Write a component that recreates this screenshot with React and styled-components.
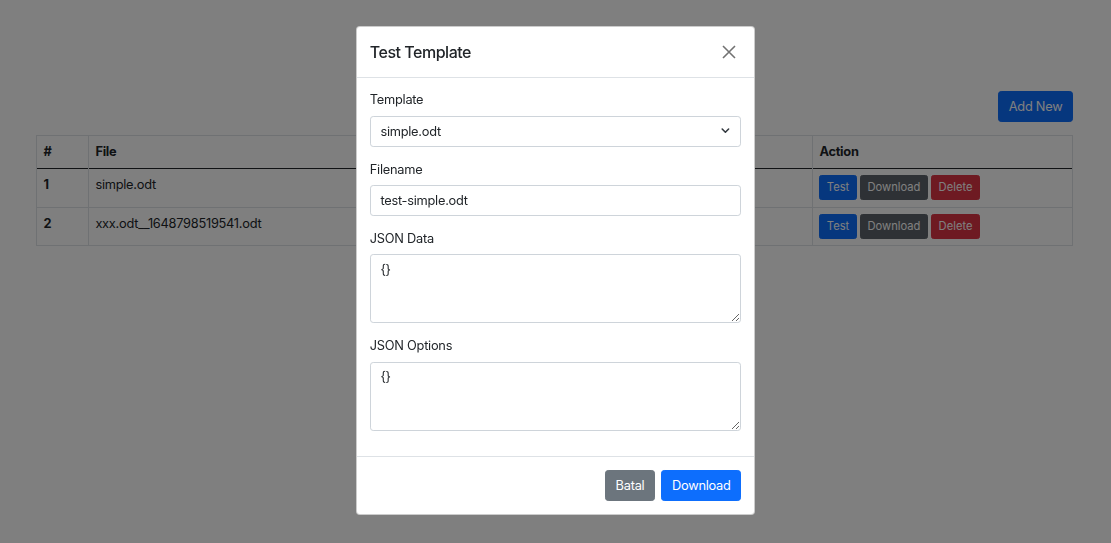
import React from "react";
import styled, { createGlobalStyle } from "styled-components";

const GlobalStyle = createGlobalStyle`
  * { box-sizing: border-box; }
  html, body { margin: 0; padding: 0; }
  body {
    font-family: Inter, "Noto Sans", "Liberation Sans", sans-serif;
    font-size: 12.8px;
    line-height: 1.5;
    letter-spacing: -0.02em;
    color: #212529;
    background: #fff;
    overflow: hidden;
  }
`;

const Page = styled.div`
  padding: 91px 38px 0 36px;
  min-height: 543px;
`;

const Toolbar = styled.div`
  display: flex;
  justify-content: flex-end;
  margin-bottom: 12.8px;
`;

const Button = styled.button`
  font-family: inherit;
  letter-spacing: ${(p) => (p.$sm ? "0" : "inherit")};
  font-size: ${(p) => (p.$sm ? "11.2px" : "12.8px")};
  line-height: 1.5;
  font-weight: 400;
  color: #fff;
  border: 1px solid transparent;
  border-radius: ${(p) => (p.$sm ? "2.56px" : "3.2px")};
  padding: ${(p) => (p.$sm ? "3.2px 6.4px" : "4.8px 9.6px")};
  background: ${(p) =>
    p.$variant === "secondary"
      ? "#6c757d"
      : p.$variant === "dark"
      ? "#5c636a"
      : p.$variant === "danger"
      ? "#dc3545"
      : "#0d6efd"};
  border-color: ${(p) =>
    p.$variant === "secondary"
      ? "#6c757d"
      : p.$variant === "dark"
      ? "#5c636a"
      : p.$variant === "danger"
      ? "#dc3545"
      : "#0d6efd"};
  cursor: pointer;
`;

const Table = styled.table`
  width: 100%;
  border-collapse: collapse;
  border: 1px solid #dee2e6;
  vertical-align: top;
  table-layout: fixed;
`;

const Th = styled.th`
  text-align: left;
  font-weight: 700;
  padding: 6.4px;
  border: 1px solid #dee2e6;
  border-bottom: none;
  width: ${(p) => p.$w || "auto"};
`;

const Td = styled.td`
  padding: 6.4px;
  border: 1px solid #dee2e6;
  border-top: ${(p) => (p.$first ? "1.6px solid #212529" : "1px solid #dee2e6")};
  font-weight: ${(p) => (p.$bold ? 700 : 400)};
  vertical-align: top;
`;

const Actions = styled.div`
  display: flex;
  gap: 3.4px;
`;

const Backdrop = styled.div`
  position: fixed;
  inset: 0;
  background: rgba(0, 0, 0, 0.5);
`;

const ModalLayer = styled.div`
  position: fixed;
  inset: 0;
  display: flex;
  justify-content: center;
  align-items: flex-start;
  padding-top: 26px;
`;

const Dialog = styled.div`
  width: 399px;
  background: #fff;
  border: 1px solid rgba(0, 0, 0, 0.2);
  border-radius: 4px;
  display: flex;
  flex-direction: column;
`;

const Header = styled.div`
  display: flex;
  align-items: center;
  justify-content: space-between;
  padding: 12.8px;
  border-bottom: 1px solid #dee2e6;
`;

const Title = styled.h5`
  margin: 0;
  font-size: 16px;
  font-weight: 500;
  line-height: 1.5;
  letter-spacing: -0.03em;
`;

const Close = styled.button`
  width: 16px;
  height: 16px;
  padding: 0;
  margin-right: 4px;
  border: 0;
  background: transparent;
  display: flex;
  align-items: center;
  justify-content: center;
  opacity: 0.55;
`;

const Body = styled.div`
  padding: 12.8px;
`;

const Group = styled.div`
  margin-bottom: 12.8px;
`;

const Label = styled.label`
  display: block;
  margin-bottom: 6.4px;
`;

const fieldCss = `
  display: block;
  width: 100%;
  font-family: inherit;
  letter-spacing: inherit;
  font-size: 12.8px;
  line-height: 1.5;
  color: #212529;
  background: #fff;
  border: 1px solid #ced4da;
  border-radius: 3.2px;
  padding: 4.8px 9.6px;
  outline: none;
  margin: 0;
`;

const Input = styled.input`
  ${fieldCss}
`;

const SelectWrap = styled.div`
  position: relative;
`;

const Select = styled.select`
  ${fieldCss}
  appearance: none;
  -webkit-appearance: none;
  padding-right: 30px;
`;

const Chevron = styled.svg`
  position: absolute;
  right: 9.6px;
  top: 50%;
  transform: translateY(-50%);
  pointer-events: none;
`;

const TextArea = styled.textarea`
  ${fieldCss}
  height: 69px;
  resize: vertical;
`;

const Footer = styled.div`
  display: flex;
  justify-content: flex-end;
  align-items: center;
  gap: 6.4px;
  padding: 12.8px 12.8px;
  border-top: 1px solid #dee2e6;
`;

const rows = [
  { id: 1, file: "simple.odt" },
  { id: 2, file: "xxx.odt__1648798519541.odt" },
];

export default function App() {
  return (
    <>
      <GlobalStyle />
      <Page>
        <Toolbar>
          <Button>Add New</Button>
        </Toolbar>
        <Table>
          <thead>
            <tr>
              <Th $w="52px">#</Th>
              <Th>File</Th>
              <Th $w="260px">Action</Th>
            </tr>
          </thead>
          <tbody>
            {rows.map((r, i) => (
              <tr key={r.id}>
                <Td $bold $first={i === 0}>{r.id}</Td>
                <Td $first={i === 0}>{r.file}</Td>
                <Td $first={i === 0}>
                  <Actions>
                    <Button $sm>Test</Button>
                    <Button $sm $variant="dark">Download</Button>
                    <Button $sm $variant="danger">Delete</Button>
                  </Actions>
                </Td>
              </tr>
            ))}
          </tbody>
        </Table>
      </Page>
      <Backdrop />
      <ModalLayer>
        <Dialog>
          <Header>
            <Title>Test Template</Title>
            <Close aria-label="Close">
              <svg width="14" height="14" viewBox="0 0 14 14">
                <path d="M1 1 L13 13 M13 1 L1 13" stroke="#000" strokeWidth="1.6" fill="none" />
              </svg>
            </Close>
          </Header>
          <Body>
            <Group>
              <Label>Template</Label>
              <SelectWrap>
                <Select defaultValue="simple.odt">
                  <option>simple.odt</option>
                  <option>xxx.odt__1648798519541.odt</option>
                </Select>
                <Chevron width="12.8" height="9.6" viewBox="0 0 16 12">
                  <path d="M4 3.5 L8 7.5 L12 3.5" stroke="#343a40" strokeWidth="2" fill="none" strokeLinecap="round" strokeLinejoin="round" />
                </Chevron>
              </SelectWrap>
            </Group>
            <Group>
              <Label>Filename</Label>
              <Input defaultValue="test-simple.odt" />
            </Group>
            <Group>
              <Label>JSON Data</Label>
              <TextArea defaultValue="{}" />
            </Group>
            <Group>
              <Label>JSON Options</Label>
              <TextArea defaultValue="{}" />
            </Group>
          </Body>
          <Footer>
            <Button $variant="secondary">Batal</Button>
            <Button>Download</Button>
          </Footer>
        </Dialog>
      </ModalLayer>
    </>
  );
}
